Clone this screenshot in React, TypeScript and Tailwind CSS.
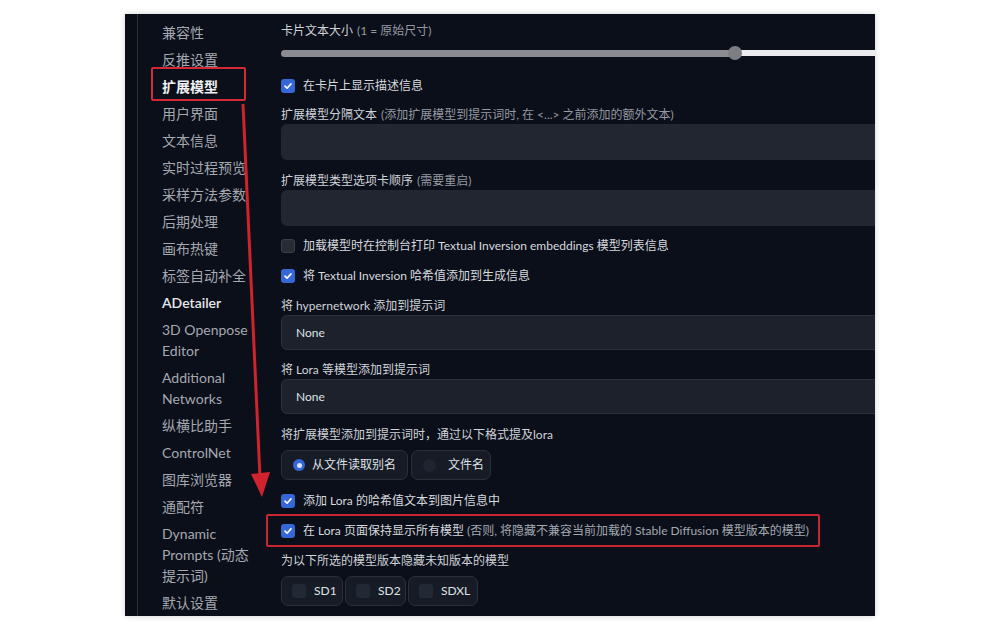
import React from "react";

const font = "font-['Lato','Noto_Sans_CJK_SC',sans-serif]";

function Check({ checked }: { checked: boolean }) {
  return checked ? (
    <span className="flex h-[14px] w-[14px] shrink-0 items-center justify-center rounded-[3px] bg-[#3567d6]">
      <svg width="10" height="10" viewBox="0 0 10 10">
        <path d="M2 5.2 L4.1 7.2 L8 2.9" fill="none" stroke="white" strokeWidth="1.7" strokeLinecap="round" strokeLinejoin="round" />
      </svg>
    </span>
  ) : (
    <span className="h-[14px] w-[14px] shrink-0 rounded-[3px] border border-[#3a404b] bg-[#262b34]" />
  );
}

function CheckRow({ checked, children, mt }: { checked: boolean; children: React.ReactNode; mt: string }) {
  return (
    <div className={`flex h-[20px] items-center gap-[8px] text-[12px] text-[#d6d9de] ${mt}`}>
      <Check checked={checked} />
      <span className="whitespace-nowrap">{children}</span>
    </div>
  );
}

function Label({ children, note, mt }: { children: React.ReactNode; note?: string; mt: string }) {
  return (
    <div className={`flex h-[18px] items-center whitespace-nowrap text-[12px] text-[#cfd3d9] ${mt}`}>
      <span>{children}</span>
      {note && <span className="ml-[4px] text-[#9499a2]">{note}</span>}
    </div>
  );
}

const sidebar: { t: string[]; cls?: string }[] = [
  { t: ["兼容性"] },
  { t: ["反推设置"] },
  { t: ["扩展模型"], cls: "text-[#eef0f3] font-semibold" },
  { t: ["用户界面"] },
  { t: ["文本信息"] },
  { t: ["实时过程预览"] },
  { t: ["采样方法参数"] },
  { t: ["后期处理"] },
  { t: ["画布热键"] },
  { t: ["标签自动补全"] },
  { t: ["ADetailer"], cls: "text-[#e6e8eb] font-semibold" },
  { t: ["3D Openpose", "Editor"] },
  { t: ["Additional", "Networks"] },
  { t: ["纵横比助手"] },
  { t: ["ControlNet"] },
  { t: ["图库浏览器"] },
  { t: ["通配符"] },
  { t: ["Dynamic", "Prompts (动态", "提示词)"] },
  { t: ["默认设置"] },
];

export default function App() {
  return (
    <div className={`relative h-[633px] w-[1000px] overflow-hidden bg-white ${font}`}>
      <div className="pl-[125px] pt-[14px]">
        <div className="flex h-[602px] w-[750px] overflow-hidden bg-[#0b0f19] shadow-[0_0_6px_rgba(0,0,0,0.18)]">
          {/* left strip + border */}
          <div className="w-[12px] shrink-0 bg-[#0a0d15]" />
          <div className="w-[1px] shrink-0 bg-[#2c313b]" />
          {/* sidebar */}
          <div className="w-[112px] shrink-0 pl-[24px] pt-[5px]">
            <div className="w-[88px]">
              {sidebar.map((s) => (
                <div
                  key={s.t.join("")}
                  className={`py-[3px] text-[14px] leading-[21px] ${s.cls ?? "text-[#a4a8b0]"}`}
                >
                  {s.t.map((line) => (
                    <div key={line} className="whitespace-nowrap">
                      {line}
                    </div>
                  ))}
                </div>
              ))}
            </div>
          </div>
          {/* content */}
          <div className="ml-[31px] flex w-[640px] shrink-0 flex-col pt-[7px]">
            <div className="flex h-[20px] items-center whitespace-nowrap text-[12px] text-[#cfd3d9]">
              卡片文本大小 <span className="ml-[4px] text-[#9499a2]">(1 = 原始尺寸)</span>
            </div>
            {/* slider */}
            <div className="relative flex h-[24px] items-center">
              <div className="flex h-[7px] w-full items-center">
                <div className="h-[7px] w-[454px] rounded-l-full bg-[#8a8c91]" />
                <div className="h-[6px] flex-1 bg-[#ebebf0]" />
              </div>
              <div className="absolute left-[447px] top-[5px] h-[14px] w-[14px] rounded-full bg-[#7c7e84]" />
            </div>
            <CheckRow checked mt="mt-[11px]">在卡片上显示描述信息</CheckRow>
            <Label mt="mt-[10px]" note="(添加扩展模型到提示词时, 在 <...> 之前添加的额外文本)">
              扩展模型分隔文本
            </Label>
            <div className="h-[36px] w-full rounded-l-[6px] bg-[#212631]" />
            <Label mt="mt-[12px]" note="(需要重启)">
              扩展模型类型选项卡顺序
            </Label>
            <div className="h-[36px] w-full rounded-l-[6px] bg-[#212631]" />
            <CheckRow checked={false} mt="mt-[10px]">
              加载模型时在控制台打印 Textual Inversion embeddings 模型列表信息
            </CheckRow>
            <CheckRow checked mt="mt-[10px]">将 Textual Inversion 哈希值添加到生成信息</CheckRow>
            <Label mt="mt-[11px]">将 hypernetwork 添加到提示词</Label>
            <div className="flex h-[35px] w-full items-center rounded-l-[6px] border border-[#2c323d] bg-[#1c212b] pl-[14px] text-[12px] text-[#dfe2e6]">
              None
            </div>
            <Label mt="mt-[11px]">将 Lora 等模型添加到提示词</Label>
            <div className="flex h-[35px] w-full items-center rounded-l-[6px] border border-[#2c323d] bg-[#1c212b] pl-[14px] text-[12px] text-[#dfe2e6]">
              None
            </div>
            <Label mt="mt-[12px]">将扩展模型添加到提示词时，通过以下格式提及lora</Label>
            <div className="mt-[6px] flex h-[30px] gap-[3px]">
              <div className="flex w-[127px] items-center gap-[7px] rounded-[7px] border border-[#2a303b] bg-[#161b25] pl-[11px] text-[12px] text-[#dfe2e6]">
                <span className="flex h-[12px] w-[12px] items-center justify-center rounded-full bg-[#3567d6]">
                  <span className="h-[5px] w-[5px] rounded-full bg-[#dce6fb]" />
                </span>
                从文件读取别名
              </div>
              <div className="flex w-[80px] items-center gap-[12px] rounded-[7px] border border-[#2a303b] bg-[#161b25] pl-[11px] text-[12px] text-[#dfe2e6]">
                <span className="h-[13px] w-[13px] rounded-full bg-[#1f2530]" />
                文件名
              </div>
            </div>
            <CheckRow checked mt="mt-[11px]">添加 Lora 的哈希值文本到图片信息中</CheckRow>
            <CheckRow checked mt="mt-[10px]">
              在 Lora 页面保持显示所有模型{" "}
              <span className="text-[#a3a8b0]">(否则, 将隐藏不兼容当前加载的 Stable Diffusion 模型版本的模型)</span>
            </CheckRow>
            <Label mt="mt-[11px]">为以下所选的模型版本隐藏未知版本的模型</Label>
            <div className="mt-[6px] flex h-[30px] gap-[2px]">
              {[
                ["SD1", "w-[62px]"],
                ["SD2", "w-[61px]"],
                ["SDXL", "w-[70px]"],
              ].map(([t, w]) => (
                <div
                  key={t}
                  className={`flex ${w} items-center gap-[8px] rounded-[7px] border border-[#2a303b] bg-[#161b25] pl-[10px] text-[12px] text-[#dfe2e6]`}
                >
                  <span className="h-[14px] w-[14px] rounded-[3px] bg-[#232934]" />
                  {t}
                </div>
              ))}
            </div>
          </div>
        </div>
      </div>

      {/* annotations */}
      <div className="absolute left-[151px] top-[67px] h-[34px] w-[95px] rounded-[2px] border-2 border-[#d42a36]" />
      <div className="absolute left-[266px] top-[514px] h-[33px] w-[554px] rounded-[2px] border-2 border-[#c92532]" />
      <svg className="absolute left-0 top-0" width="1000" height="633" viewBox="0 0 1000 633">
        <line x1="243" y1="104" x2="260" y2="478" stroke="#d0232e" strokeWidth="3" />
        <polygon points="251,474 270,472 262,497" fill="#d0232e" />
      </svg>
    </div>
  );
}
